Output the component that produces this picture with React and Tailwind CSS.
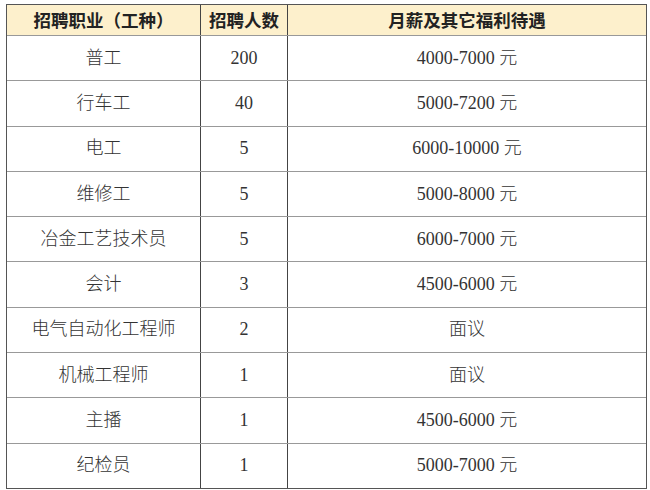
const rows = [
  ['普工', '200', '4000-7000 元'],
  ['行车工', '40', '5000-7200 元'],
  ['电工', '5', '6000-10000 元'],
  ['维修工', '5', '5000-8000 元'],
  ['冶金工艺技术员', '5', '6000-7000 元'],
  ['会计', '3', '4500-6000 元'],
  ['电气自动化工程师', '2', '面议'],
  ['机械工程师', '1', '面议'],
  ['主播', '1', '4500-6000 元'],
  ['纪检员', '1', '5000-7000 元'],
];

const App = () => {
  return (
    <div className="w-[650px] h-[490px] bg-white pt-[4px] pl-[6px]">
      <div className="w-[641px] border border-[#555]">
        <div className="grid grid-cols-[193px_87px_1fr] h-[30px] bg-[#fdf0cc] text-[17.5px] font-bold text-[#222] font-['Noto_Sans_CJK_SC',sans-serif]">
          <div className="flex items-center justify-center">招聘职业（工种）</div>
          <div className="flex items-center justify-center border-l border-[#444]">招聘人数</div>
          <div className="flex items-center justify-center border-l border-[#444]">月薪及其它福利待遇</div>
        </div>
        {rows.map((r, i) => (
          <div
            key={i}
            className="grid grid-cols-[193px_87px_1fr] h-[45.3px] border-t border-[#999] text-[18px] text-[#333] font-light font-['Liberation_Serif','Noto_Sans_CJK_SC',serif]"
          >
            <div className="flex items-center justify-center">{r[0]}</div>
            <div className="flex items-center justify-center border-l border-[#444]">{r[1]}</div>
            <div className="flex items-center justify-center border-l border-[#444]">{r[2]}</div>
          </div>
        ))}
      </div>
    </div>
  );
};

export default App;
